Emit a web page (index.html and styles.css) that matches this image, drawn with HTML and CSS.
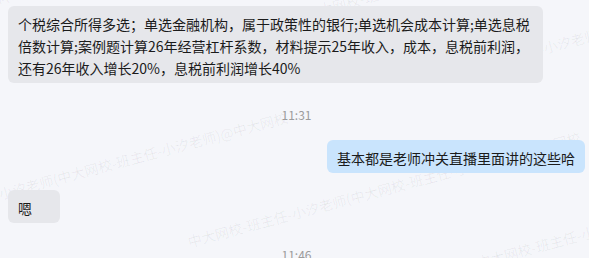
FILE: index.html
```html
<!DOCTYPE html>
<html lang="zh-CN">
<head>
<meta charset="utf-8">
<title>聊天记录</title>
<link rel="stylesheet" href="styles.css">
</head>
<body>
<div class="watermark" aria-hidden="true">
  <div class="wm-rows">
    <div class="wm-row wm-a"><span>中大网校-班主任-小汐老师(中大网校-班主任-小汐老师)@中大网校</span><span>中大网校-班主任-小汐老师(中大网校-班主任-小汐老师)@中大网校</span><span>中大网校-班主任-小汐老师(中大网校-班主任-小汐老师)@中大网校</span></div>
    <div class="wm-row wm-b"><span>中大网校-班主任-小汐老师(中大网校-班主任-小汐老师)@中大网校</span><span>中大网校-班主任-小汐老师(中大网校-班主任-小汐老师)@中大网校</span><span>中大网校-班主任-小汐老师(中大网校-班主任-小汐老师)@中大网校</span></div>
    <div class="wm-row wm-a"><span>中大网校-班主任-小汐老师(中大网校-班主任-小汐老师)@中大网校</span><span>中大网校-班主任-小汐老师(中大网校-班主任-小汐老师)@中大网校</span><span>中大网校-班主任-小汐老师(中大网校-班主任-小汐老师)@中大网校</span></div>
    <div class="wm-row wm-c"><span>中大网校-班主任-小汐老师(中大网校-班主任-小汐老师)@中大网校</span><span>中大网校-班主任-小汐老师(中大网校-班主任-小汐老师)@中大网校</span><span>中大网校-班主任-小汐老师(中大网校-班主任-小汐老师)@中大网校</span></div>
    <div class="wm-row wm-d"><span>中大网校-班主任-小汐老师(中大网校-班主任-小汐老师)@中大网校</span><span>中大网校-班主任-小汐老师(中大网校-班主任-小汐老师)@中大网校</span><span>中大网校-班主任-小汐老师(中大网校-班主任-小汐老师)@中大网校</span></div>
  </div>
</div>

<main class="chat">
  <div class="bubble left wide">个税综合所得多选；单选金融机构，属于政策性的银行;单选机会成本计算;单选息税倍数计算;案例题计算26年经营杠杆系数，材料提示25年收入，成本，息税前利润，还有26年收入增长20%，息税前利润增长40%</div>
  <div class="time">11:31</div>
  <div class="bubble right">基本都是老师冲关直播里面讲的这些哈</div>
  <div class="bubble left short">嗯</div>
  <div class="time">11:46</div>
</main>
</body>
</html>
```
FILE: styles.css
```css
html, body {
  margin: 0;
  height: 100%;
  overflow: hidden;
}

body {
  background: #f5f6fa;
  font-family: "Noto Sans CJK SC", "Microsoft YaHei", sans-serif;
  color: #1b1b1b;
  position: relative;
}

.watermark {
  position: absolute;
  inset: 0;
  overflow: hidden;
  pointer-events: none;
  z-index: 0;
}

.wm-rows {
  position: absolute;
  left: 0;
  top: 0;
  transform-origin: 0 0;
  transform: rotate(-15deg) translateY(-50px);
}

.wm-row {
  display: flex;
  height: 95px;
  line-height: 95px;
  font-size: 14px;
  white-space: nowrap;
  color: rgba(0, 0, 0, 0.06);
}

.wm-row span {
  flex: 0 0 564px;
  width: 564px;
}

.wm-a { margin-left: -159px; }
.wm-b { margin-left: -441px; }
.wm-c { margin-left: -445px; }
.wm-d { margin-left: -171px; }

.chat {
  position: relative;
  z-index: 1;
  display: flex;
  flex-direction: column;
  gap: 17px;
  padding: 6px 4px 0 8px;
}

.bubble {
  box-sizing: border-box;
  font-size: 14px;
  line-height: 22px;
  padding: 7px 10px 4px;
  border-radius: 6px;
}

.left {
  align-self: flex-start;
  background: #e6e7eb;
}

.wide {
  max-width: 535px;
}

.short {
  min-width: 52px;
}

.right {
  align-self: flex-end;
  background: #c9e4fd;
}

.time {
  align-self: center;
  padding-top: 7px;
  font-size: 12px;
  line-height: 16px;
  color: #9c9c9c;
}
```
